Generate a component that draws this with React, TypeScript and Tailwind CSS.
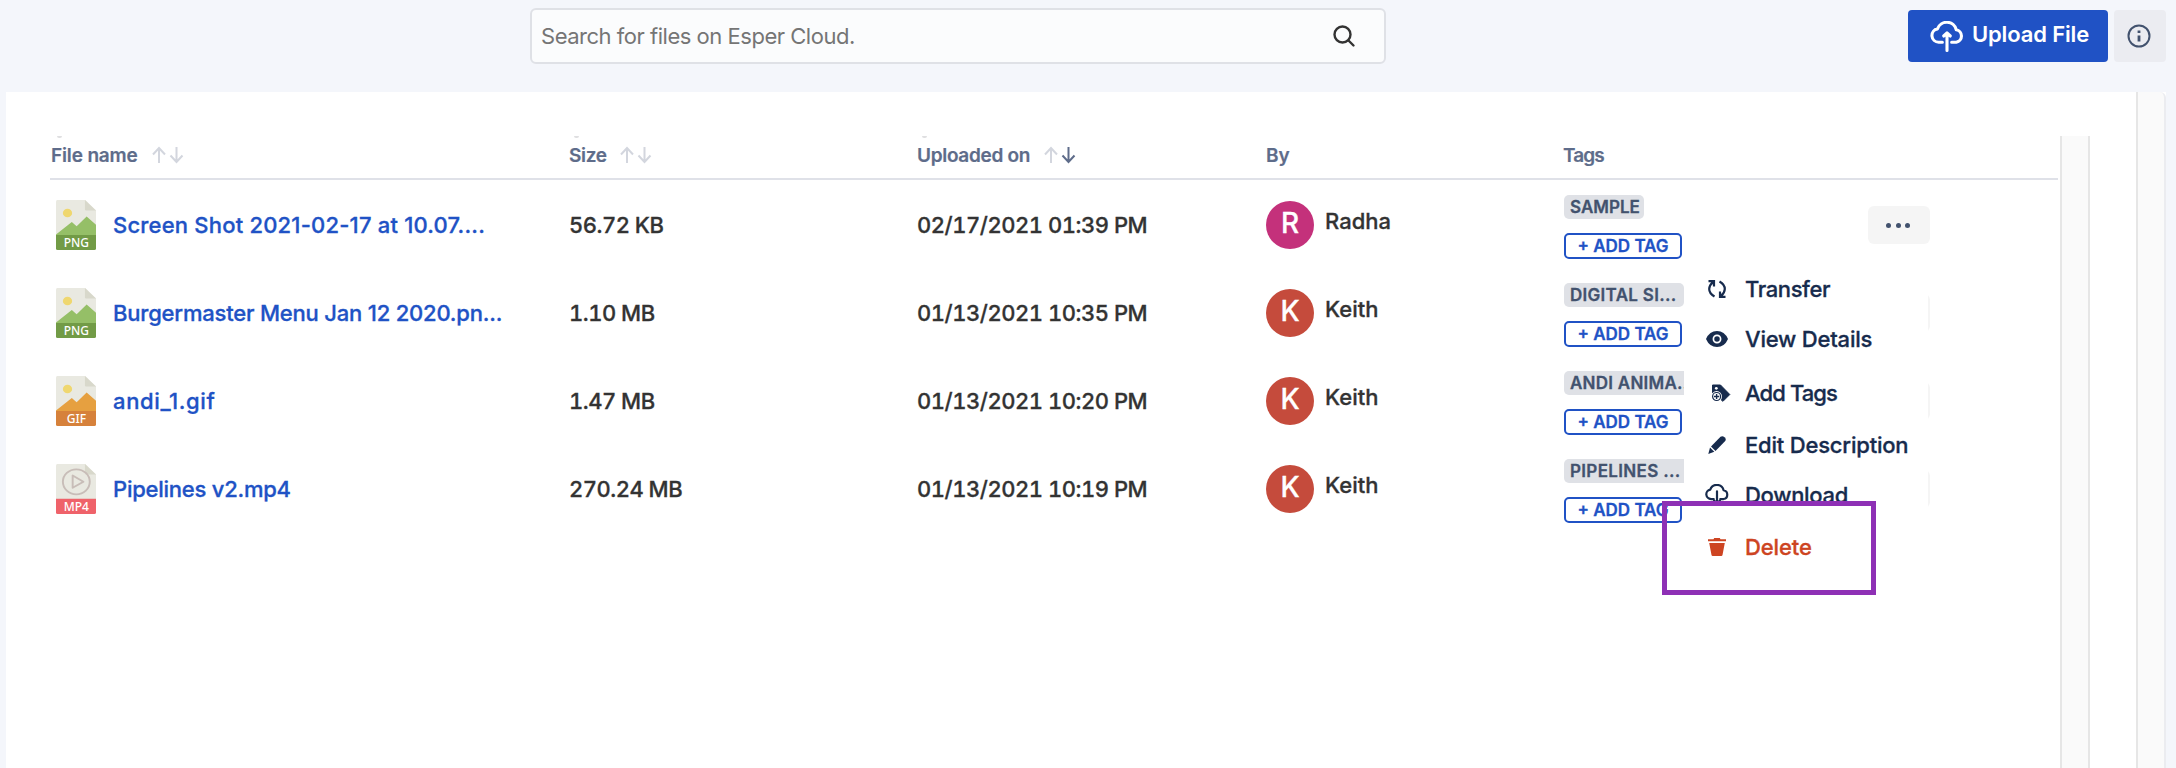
import React from "react";

type Kind = "PNG" | "GIF" | "MP4";

function FileIcon({ kind }: { kind: Kind }) {
  const base = kind === "PNG" ? "#729b46" : kind === "GIF" ? "#d6813b" : "#ef626a";
  const hill = kind === "PNG" ? "#95bf67" : "#e6a040";
  return (
    <svg width="40" height="50" viewBox="0.3 0 37.2 50" preserveAspectRatio="none" className="block shrink-0">
      <path d="M1.5 0H27.5L37.5 10.5V36H0.3V1.5Q0.3 0 1.5 0Z" fill="#e9e9e1" />
      <path d="M27.2 0V9.5Q27.2 10.5 28.2 10.5H37.5Z" fill="#d8d8cb" />
      {kind === "MP4" ? (
        <>
          <circle cx="19.2" cy="17.8" r="12.5" fill="none" stroke="#c8bdb8" strokeWidth="1.8" />
          <path d="M15.8 11.5V23.8L25.8 17.7Z" fill="none" stroke="#c8bdb8" strokeWidth="1.8" strokeLinejoin="round" />
          <path d="M.3 34.5H37.5" stroke="#e8c9c4" strokeWidth="1" />
        </>
      ) : (
        <>
          <circle cx="11" cy="13" r="4.3" fill="#efd76f" />
          <path d="M.3 34.5L15 22L19.5 26.3L28.8 16.5L37.5 24.7V35H.3Z" fill={hill} />
        </>
      )}
      <path d="M.3 35H37.5V48.5Q37.5 50 36 50H1.8Q.3 50 .3 48.5Z" fill={base} />
      <text x="19.2" y="47.5" textAnchor="middle" fontFamily="Noto Sans, sans-serif" fontSize="13" fontWeight="500" fill="#fff" strokeWidth="0" textLength={kind === "GIF" ? 18 : 23.5} lengthAdjust="spacingAndGlyphs">
        {kind}
      </text>
    </svg>
  );
}

function Sort({ desc = false }: { desc?: boolean }) {
  return (
    <svg width="32" height="18" viewBox="0 0 32 18" fill="none" strokeWidth="2" className="block">
      <path d="M7 17V2M1 8.5L7 2L13 8.5" stroke="#d3d6de" />
      <path d="M24.500 1V16M18.500 9.500L24.500 16L30.500 9.500" stroke={desc ? "#5e6c8a" : "#d3d6de"} />
    </svg>
  );
}

const rows: { kind: Kind; name: string; nameCls: string; size: string; date: string; by: string; color: string; tag: string; tagCls: string }[] = [
  { kind: "PNG", name: "Screen Shot 2021-02-17 at 10.07....", nameCls: "tracking-[0.2px]", size: "56.72 KB", date: "02/17/2021 01:39 PM", by: "Radha", color: "bg-[#c4317b]", tag: "SAMPLE", tagCls: "w-20" },
  { kind: "PNG", name: "Burgermaster Menu Jan 12 2020.pn...", nameCls: "tracking-[-0.2px]", size: "1.10 MB", date: "01/13/2021 10:35 PM", by: "Keith", color: "bg-[#c54b3c]", tag: "DIGITAL SI...", tagCls: "w-[120px] tracking-[0.3px]" },
  { kind: "GIF", name: "andi_1.gif", nameCls: "tracking-[0.65px]", size: "1.47 MB", date: "01/13/2021 10:20 PM", by: "Keith", color: "bg-[#c54b3c]", tag: "ANDI ANIMA...", tagCls: "w-[132px] tracking-[0.25px]" },
  { kind: "MP4", name: "Pipelines v2.mp4", nameCls: "tracking-[-0.24px]", size: "270.24 MB", date: "01/13/2021 10:19 PM", by: "Keith", color: "bg-[#c54b3c]", tag: "PIPELINES ...", tagCls: "w-[132px] tracking-[0.35px]" },
];

const cols = "grid grid-cols-[518px_348px_348px_298px_305px_1fr]";

function CloudArrow({ up, className }: { up?: boolean; className: string }) {
  return (
    <svg viewBox="0 0 32 30" className={className} fill="none" stroke="currentColor" strokeWidth="3" strokeLinecap="round" strokeLinejoin="round">
      <path d="M11.500 20.500H8A6.500 6.500 0 0 1 6.800 7.600A9.500 9.500 0 0 1 25 8.500A6.100 6.100 0 0 1 25 20.500H20.500" />
      {up ? <path d="M16 28.500V12M12.800 14.500L16 11.600L19.200 14.500" /> : <path d="M16 10V26M12 22.500L16 26.500L20 22.500" />}
    </svg>
  );
}

const icons = {
  transfer: (
    <svg viewBox="0 0 18 18" className="size-[18px]" fill="none" stroke="currentColor" strokeWidth="2.200">
      <path d="M6.500 16.500Q1.200 13.500 1.200 9Q1.300 5 5.200 1.800M.500 1.200H6V6.500" />
      <path d="M11.500 1.500Q16.800 4.500 16.800 9Q16.700 13 12.800 16.200M17.500 16.800H12V11.500" />
    </svg>
  ),
  view: (
    <svg viewBox="0 0 22 16" className="h-4 w-[22px]">
      <path d="M0 8Q3.500 0 11 0T22 8Q18.500 16 11 16T0 8Z" fill="currentColor" />
      <circle cx="11" cy="8" r="3.600" fill="none" stroke="#fff" strokeWidth="1.700" />
    </svg>
  ),
  tags: (
    <svg viewBox="0 0 20 18" className="ml-2 h-[18px] w-5">
      <path d="M1.500 1H9.500L18.800 10.500L12 17.300L1.500 9Z" fill="currentColor" stroke="currentColor" strokeLinejoin="round" />
      <circle cx="5.300" cy="4.300" r="1.400" fill="#fff" />
      <circle cx="5.600" cy="12.500" r="5.400" fill="#fff" />
      <circle cx="5.600" cy="12.500" r="4" fill="none" stroke="currentColor" strokeWidth="1.200" />
      <path d="M3 12.500H8.200M5.600 9.900V15.100" stroke="currentColor" strokeWidth="1.400" />
    </svg>
  ),
  edit: (
    <svg viewBox="0 0 18 18" className="size-[18px]" fill="currentColor">
      <path d="M12.500 .8Q14.500-.5 16.500 1.200Q18.600 3 17.200 5L7.500 15L3 10.500Z" />
      <path d="M2 11.500L6.300 15.800L.3 18Z" />
    </svg>
  ),
  trash: (
    <svg viewBox="0 0 18 18" className="size-[18px]" fill="currentColor">
      <path d="M0 1.200H5.500L6.200 0H11.800L12.500 1.200H18V3.300H0ZM1.200 5H16.800L14.500 17Q14.300 18 13.300 18H4.700Q3.700 18 3.500 17Z" />
    </svg>
  ),
};

function Item({ icon, label, cls }: { icon: React.ReactNode; label: string; cls: string }) {
  return (
    <div className={"flex items-center text-[22px] font-medium whitespace-nowrap " + cls}>
      <span className="flex w-[61px] shrink-0 justify-center pl-1">{icon}</span>
      <span className="[-webkit-text-stroke:0.3px]">{label}</span>
    </div>
  );
}

export default function App() {
  return (
    <div className="flex h-[768px] w-[2176px] flex-col overflow-hidden bg-[#f4f6fb] font-['Inter',sans-serif] text-[#333]">
      <header className="flex h-[92px] shrink-0 items-start pt-2 pr-2.5">
        <div className="ml-[530px] flex h-14 w-[856px] items-center justify-between rounded-md border-2 border-[#dfe1e6] bg-[#fbfcfd] pr-7 pl-[9px]">
          <span className="text-[22px] tracking-[-0.48px] text-[#757575]">Search for files on Esper Cloud.</span>
          <svg width="24" height="24" viewBox="0 0 24 24" fill="none" stroke="#333" strokeWidth="2.400" strokeLinecap="round">
            <circle cx="10.500" cy="10.500" r="8" />
            <path d="M16.500 16.500L21.500 21.500" />
          </svg>
        </div>
        <button className="mt-0.5 ml-auto flex h-[52px] w-[200px] items-center rounded bg-[#2052c5] pl-[22px] text-white">
          <CloudArrow up className="h-[31px] w-[34px]" />
          <span className="ml-2 pb-1 text-[22px] font-semibold tracking-[-0.15px] whitespace-nowrap">Upload File</span>
        </button>
        <button className="mt-0.5 ml-1.5 flex size-[52px] items-center justify-center rounded bg-[#ebecf1] pr-0.5">
          <svg width="24" height="24" viewBox="0 0 24 24" fill="none" stroke="#42526e">
            <circle cx="12" cy="12" r="10.500" strokeWidth="2" />
            <path d="M12 11.500V17.500M12 6.500V9" strokeWidth="2.800" />
          </svg>
        </button>
      </header>
      <main className="mr-2.5 ml-1.5 flex min-h-0 grow bg-white">
        <div className="mt-11 flex w-[2054px] shrink-0 flex-col pl-11">
          <div className={cols + " relative mr-0.5 h-11 shrink-0 border-b-2 border-[#dfe1e8] pt-2.5 text-[19px] font-semibold text-[#5e6c8a]"}>
            <div className="flex items-start gap-3.5 pl-px"><span className="leading-5 tracking-[-0.15px] [-webkit-text-stroke:0.2px]">File name</span><Sort /></div>
            <div className="flex items-start gap-[13px] pl-px"><span className="leading-5 tracking-[-0.3px] [-webkit-text-stroke:0.2px]">Size</span><Sort /></div>
            <div className="flex items-start gap-3.5 pl-px"><span className="leading-5 tracking-[-0.3px] [-webkit-text-stroke:0.2px]">Uploaded on</span><Sort desc /></div>
            <div className="pl-0.5 leading-5 [-webkit-text-stroke:0.2px]">By</div>
            <div className="pl-px leading-5 tracking-[-0.9px] [-webkit-text-stroke:0.2px]">Tags</div>
            <span className="absolute top-0 left-[7px] h-0.5 w-[5px] rounded-b bg-[#dfdfe1]" />
            <span className="absolute top-0 left-[524px] h-0.5 w-[5px] rounded-b bg-[#dfdfe1]" />
            <span className="absolute top-0 left-[872px] h-0.5 w-[5px] rounded-b bg-[#dfdfe1]" />
          </div>
          <div className="relative pt-px">
            {rows.map((r) => (
              <div key={r.name} className={cols + " h-[88px] items-center text-[22px] font-medium [-webkit-text-stroke:0.3px]"}>
                <div className="flex items-center gap-[17px] pl-1.5 whitespace-nowrap text-[#2052c5]">
                  <FileIcon kind={r.kind} />
                  <span className={r.nameCls}>{r.name}</span>
                </div>
                <div className="pl-px tracking-[-0.5px] tabular-nums">{r.size}</div>
                <div className="pl-px tracking-[-0.48px] whitespace-nowrap tabular-nums">{r.date}</div>
                <div className="flex items-center gap-[11px] pl-0.5">
                  <span className={"flex size-12 items-center justify-center rounded-full pb-1 text-[28px] text-white " + r.color}>{r.by[0]}</span>
                  <span className="pb-2">{r.by}</span>
                </div>
                <div className="flex flex-col items-start gap-3.5 pt-1 pl-0.5 text-[17px] font-semibold">
                  <span className={"h-6 rounded-[5px] bg-[#dfe1e6] pl-1.5 leading-6 whitespace-nowrap text-[#42526e] " + r.tagCls}>{r.tag}</span>
                  <button className="h-[26px] w-[118px] rounded-[5px] border-2 border-[#2052c5] leading-5 whitespace-nowrap text-[#2052c5]">+ ADD TAG</button>
                </div>
                <div className="ml-px flex h-[38px] w-[62px] items-center justify-center gap-[4.6px] rounded-md bg-[#f5f5f5] pr-0.5">
                  <i className="size-[5px] rounded-full bg-[#42526e]" />
                  <i className="size-[5px] rounded-full bg-[#42526e]" />
                  <i className="size-[5px] rounded-full bg-[#42526e]" />
                </div>
              </div>
            ))}
            <div className="absolute top-[84px] left-[1634px] flex w-[244px] flex-col bg-white text-[#172b4d]">
              <Item cls="h-[50px] tracking-[-0.4px]" icon={icons.transfer} label="Transfer" />
              <Item cls="h-[50px] tracking-[-0.2px]" icon={icons.view} label="View Details" />
              <Item cls="h-[58px] tracking-[-0.9px]" icon={icons.tags} label="Add Tags" />
              <Item cls="h-[46px] tracking-[-0.2px]" icon={icons.edit} label="Edit Description" />
              <Item cls="h-[54px] tracking-[-0.3px]" icon={<CloudArrow className="h-[22px] w-6" />} label="Download" />
              <Item cls="h-[50px] tracking-[-0.1px] text-[#cd4422]" icon={icons.trash} label="Delete" />
            </div>
            <div className="absolute top-[321px] left-[1612px] h-[94px] w-[214px] border-[5px] border-[#8e30b5]" />
          </div>
        </div>
        <div className="mt-11 w-[30px] shrink-0 border-x-2 border-[#e6e6e6] bg-[#fafafa]" />
        <div className="ml-auto w-[30px] shrink-0 rounded-tr-md border-x-2 border-l-[#e6e6e6] border-r-[#ebecf0] bg-[#fafafa]" />
      </main>
    </div>
  );
}
